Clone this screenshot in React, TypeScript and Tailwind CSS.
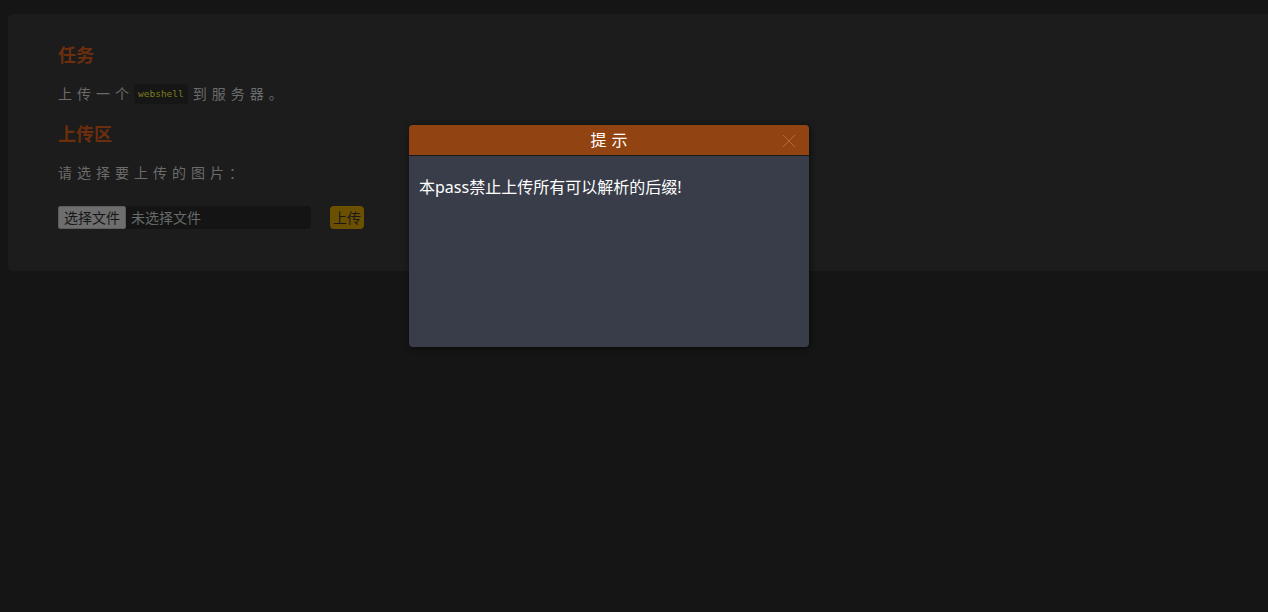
import React from "react";

const cjk = "font-['Noto_Sans','Noto_Sans_CJK_SC',sans-serif]";

function CloseIcon() {
  return (
    <svg width="14" height="14" viewBox="0 0 14 14" className="block">
      <path d="M1 1 L13 13 M13 1 L1 13" stroke="#b5693a" strokeWidth="1" fill="none" />
    </svg>
  );
}

function FileField() {
  return (
    <div className="flex items-center gap-[19px]">
      <div className="flex items-center w-[253px] h-[23px] bg-[#141414] rounded-[4px]">
        <div className="h-[23px] w-[68px] flex items-center justify-center bg-[#6e6e6e] border border-[#5c5c5c] rounded-[2px] text-[14px] text-[#161616]">
          选择文件
        </div>
        <span className="ml-[5px] text-[14px] text-[#666a6a]">未选择文件</span>
      </div>
      <div className="h-[23px] w-[34px] mt-[1px] flex items-center justify-center bg-[#6a5000] rounded-[4px] text-[14px] text-[#181818]">
        上传
      </div>
    </div>
  );
}

export default function App() {
  return (
    <div className={`relative w-full h-[612px] overflow-hidden bg-[#151515] ${cjk}`}>
      <div className="pt-[14px] pl-2">
        {/* page card, runs off the right edge */}
        <div className="w-[1300px] bg-[#1c1c1c] rounded-[5px] pt-[29px] pl-[50px] pb-[42px]">
          <h3 className="text-[18px] leading-[24px] font-bold text-[#6c2e0d]">任务</h3>
          <p className="mt-[17px] h-[20px] flex items-center text-[14px] leading-[20px] tracking-[5px] text-[#6b6b6b]">
            <span>上传一个</span>
            <code className="mr-[5px] px-[4px] h-[20px] flex items-center rounded-[4px] bg-[#161616] text-[9.5px] tracking-normal text-[#7d7b1c] font-['DejaVu_Sans_Mono',monospace]">
              webshell
            </code>
            <span>到服务器。</span>
          </p>
          <h3 className="mt-[18px] text-[18px] leading-[24px] font-bold text-[#6c2e0d]">上传区</h3>
          <p className="mt-[17px] text-[14px] leading-[20px] tracking-[5px] text-[#6b6b6b]">请选择要上传的图片：</p>
          <div className="mt-[22px]">
            <FileField />
          </div>
        </div>
      </div>

      {/* layer dialog */}
      <div className="absolute left-[409px] top-[125px] w-[400px] h-[222px] flex flex-col rounded-[4px] overflow-hidden bg-[#393d49] shadow-[1px_1px_6px_rgba(0,0,0,0.6)]">
        <div className="relative h-[31px] shrink-0 flex items-center justify-center bg-[#914411] border-b border-[#1a1a1a]">
          <span className="pl-[5px] text-[16px] tracking-[5px] text-white">提示</span>
          <div className="absolute right-[13px] top-[9px]">
            <CloseIcon />
          </div>
        </div>
        <div className="px-[10px] pt-[19px] text-[16px] leading-[24px] text-white">
          本pass禁止上传所有可以解析的后缀!
        </div>
      </div>
    </div>
  );
}
